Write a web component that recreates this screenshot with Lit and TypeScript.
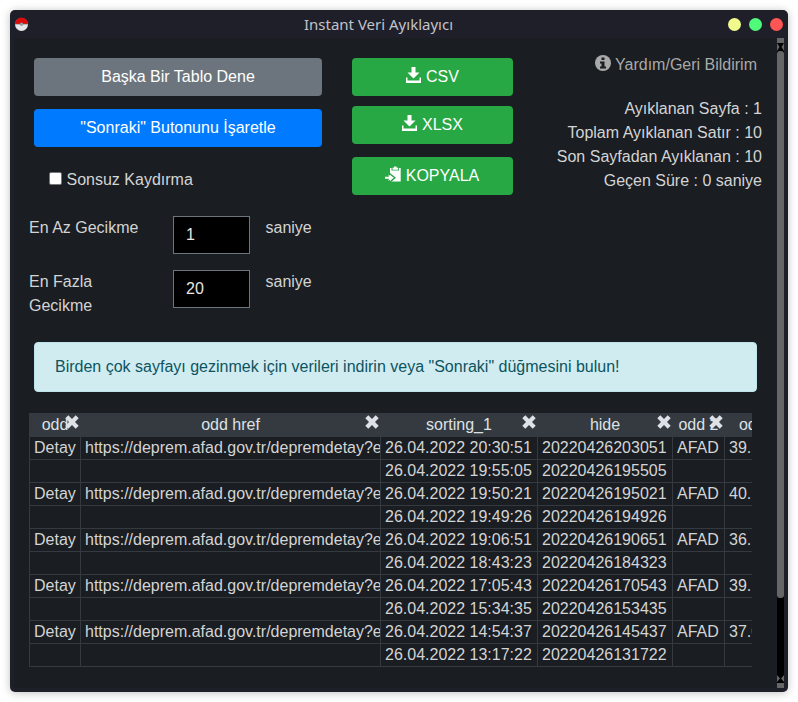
import { LitElement, html, css, svg } from "lit";
import { customElement, state } from "lit/decorators.js";

const download = svg`<path d="M6.500 0h4v5.500h4L8.500 11.500 2.500 5.500h4z"/><path d="M1 10.500h1.500v3h12v-3H16V16H1z"/>`;
const clipboard = svg`<path d="M5 2h1.500v2.500h7.500V2h1.700v13.500H5z"/><path d="M7.500 3.700V1.800h1.300L9.200.5h2.200l.4 1.300h1.400v1.900z"/><path d="M4.500 7.500 9.800 11.700 5 16" fill="none" stroke="#28a745" stroke-width="1.500"/><path d="M0 10.800h4L3.300 8.500 7.800 11.700 3.300 15l.7-2.200H0z"/>`;

@customElement("app-root")
export class AppRoot extends LitElement {
  @state() private headers = ["odd", "odd href", "sorting_1", "hide", "odd 2", "odd 3"];

  @state() private rows = [
    ["26.04.2022 20:30:51", "20220426203051", "39.1"],
    ["26.04.2022 19:55:05", "20220426195505", ""],
    ["26.04.2022 19:50:21", "20220426195021", "40.1"],
    ["26.04.2022 19:49:26", "20220426194926", ""],
    ["26.04.2022 19:06:51", "20220426190651", "36.1"],
    ["26.04.2022 18:43:23", "20220426184323", ""],
    ["26.04.2022 17:05:43", "20220426170543", "39.1"],
    ["26.04.2022 15:34:35", "20220426153435", ""],
    ["26.04.2022 14:54:37", "20220426145437", "37.0"],
    ["26.04.2022 13:17:22", "20220426131722", ""],
  ];

  static styles = css`
    :host { display: block; height: 702px; padding: 10px; background: #fff; overflow: hidden;
      font: 16px/24px "Liberation Sans", Arial, sans-serif; color: #d3d4d5; }
    :host, * { box-sizing: border-box; }
    .window { width: 778px; height: 682px; border-radius: 5px; background: #1e1f29; padding: 0 4px 4px;
      display: flex; flex-direction: column; box-shadow: 0 1px 8px rgba(0, 0, 0, .25); }
    .title { height: 28px; flex: none; display: grid; grid-template-columns: 18px 1fr 60px; align-items: center;
      font: 15px/28px "Noto Sans", sans-serif; color: #c3c3ca; text-align: center; }
    .name { padding-left: 1px; }
    .ball { width: 14px; height: 14px; display: block; }
    .dots { display: flex; gap: 8px; justify-content: flex-end; padding-right: 1px; }
    .dot { width: 13px; height: 13px; border-radius: 50%; }
    .yellow { background: #f1fa8c; } .green { background: #50fa7b; } .red { background: #ff5555; }
    .body { flex: 1; display: flex; background: #1a1d21; min-height: 0; }
    .page { flex: 1; min-width: 0; padding: 20px 20px 0 15px; }
    .top { display: grid; grid-template-columns: 288px 161px 1fr; column-gap: 30px; padding-left: 5px; height: 284px; }
    .btn { height: 38px; border-radius: 4px; color: #fff; display: flex; align-items: center; justify-content: center; gap: 4px;
      padding-bottom: 1px; }
    .gray { background: #6c757d; }
    .blue { background: #007bff; margin-top: 13px; }
    .export { background: #28a745; padding-right: 1px; }
    .export + .export { margin-top: 10px; }
    .export + .copy { margin-top: 13px; }
    .icon { width: 17px; height: 17px; fill: #fff; margin-top: -2px; }
    .check { display: flex; align-items: center; gap: 4.500px; margin: 21px 0 0 15px; }
    .box { width: 13px; height: 13px; background: #fff; border: 1px solid #767676; border-radius: 2px; margin-top: -3px; }
    .delay { display: grid; grid-template-columns: 144px 77px 1fr; margin: 24px 0 0 -5px; }
    .delay + .delay { margin-top: 16px; }
    .caption { width: 115px; }
    .field { height: 38px; background: #000; border: 1px solid #6c757d; padding: 6px 12px; color: #e8e6e3; }
    .unit { padding-left: 15.500px; }
    .info { text-align: right; margin-right: -5px; }
    .help { display: flex; justify-content: flex-end; align-items: center; gap: 4px; color: #a9a9a9; margin: -5px 5px 20px 0; }
    .help-icon { width: 16px; height: 16px; margin-top: -4px; }
    .alert { height: 50px; margin: 0 0 21px 5px; padding: 12px 20px; border: 1px solid #bee5eb; border-radius: 4px;
      background: #d1ecf1; color: #0c5460; }
    .table { width: 723px; overflow: hidden; border-left: 1px solid #343a40; }
    .row { display: grid; grid-template-columns: 51px 300px 157px 135px 52px 69px; height: 23px; width: 764px; }
    .head { background: #343a40; height: 24px; color: #dee2e6; }
    .cell { border-right: 1px solid #343a40; border-bottom: 1px solid #343a40; padding-left: 4px; line-height: 21px;
      white-space: nowrap; overflow: hidden; }
    .th { position: relative; text-align: center; line-height: 23px; white-space: nowrap; padding-right: 1px; }
    .close { position: absolute; right: 2px; top: 2px; width: 14px; height: 14px; fill: #dee2e6; }
    .scroll { width: 7px; background: #000; display: flex; flex-direction: column; align-items: center; flex: none; }
    .arrows { width: 7px; height: 13px; display: block; }
    .thumb { width: 7px; height: 547px; border-radius: 3px; background: #666; }
    .down { margin-top: auto; }
  `;

  private icon(shape: unknown) {
    return html`<svg class="icon" viewBox="0 0 17 17">${shape}</svg>`;
  }

  private delay(caption: string, value: number) {
    return html`<div class="delay"><div class="caption">${caption}</div><div class="field">${value}</div><div class="unit">saniye</div></div>`;
  }

  render() {
    return html`<div class="window">
      <div class="title">
        <svg class="ball" viewBox="0 0 14 14"><circle cx="7.500" cy="7.500" r="6.500" fill="#e4e8e9"/><path d="M1 7a6.500 6.500 0 0 1 13 0z" fill="#d90b0b"/><path d="M1 7.200h13" stroke="#777" stroke-width=".6"/><circle cx="7.500" cy="7.200" r="1.700" fill="#999"/></svg>
        <span class="name">Instant Veri Ayıklayıcı</span>
        <div class="dots"><i class="dot yellow"></i><i class="dot green"></i><i class="dot red"></i></div>
      </div>
      <div class="body">
        <div class="page">
          <div class="top">
            <div>
              <div class="btn gray">Başka Bir Tablo Dene</div>
              <div class="btn blue">"Sonraki" Butonunu İşaretle</div>
              <div class="check"><span class="box"></span>Sonsuz Kaydırma</div>
              ${this.delay("En Az Gecikme", 1)}${this.delay("En Fazla Gecikme", 20)}
            </div>
            <div>
              <div class="btn export">${this.icon(download)}CSV</div>
              <div class="btn export">${this.icon(download)}XLSX</div>
              <div class="btn export copy">${this.icon(clipboard)}KOPYALA</div>
            </div>
            <div class="info">
              <div class="help"><svg class="help-icon" viewBox="0 0 16 16"><circle cx="8" cy="8" r="8" fill="#a9a9a9"/><path d="M6.500 2.500h3V5h-3zM5 6.500h4.500v5H11v2H5v-2h1.500v-3H5z" fill="#1a1d21"/></svg>Yardım/Geri Bildirim</div>
              <div>Ayıklanan Sayfa : 1</div>
              <div>Toplam Ayıklanan Satır : 10</div>
              <div>Son Sayfadan Ayıklanan : 10</div>
              <div>Geçen Süre : 0 saniye</div>
            </div>
          </div>
          <div class="alert">Birden çok sayfayı gezinmek için verileri indirin veya "Sonraki" düğmesini bulun!</div>
          <div class="table">
            <div class="row head">${this.headers.map((h) => html`<div class="th">${h}<svg class="close" viewBox="0 0 14 14"><path d="M3.300.3 7 4l3.700-3.700 3 3L10 7l3.700 3.700-3 3L7 10l-3.700 3.700-3-3L4 7 .3 3.300z"/></svg></div>`)}</div>
            ${this.rows.map(([date, id, lat]) => html`<div class="row">
              <div class="cell">${lat ? "Detay" : ""}</div>
              <div class="cell">${lat ? "https://deprem.afad.gov.tr/depremdetay?eventID=" : ""}</div>
              <div class="cell">${date}</div><div class="cell">${id}</div>
              <div class="cell">${lat ? "AFAD" : ""}</div><div class="cell">${lat}</div></div>`)}
          </div>
        </div>
        <div class="scroll">
          <svg class="arrows" viewBox="0 0 7 13"><path d="M0 0h7v13H0z" fill="#666"/><path d="M0 5h7L4.500 9 7 13H0L2.500 9z"/></svg>
          <div class="thumb"></div>
          <svg class="arrows down" viewBox="0 0 7 13"><path d="M0 0 3 3.500 0 7zM7 0 4 3.500 7 7zM0 8h7v5H0z" fill="#666"/></svg>
        </div>
      </div>
    </div>`;
  }
}
